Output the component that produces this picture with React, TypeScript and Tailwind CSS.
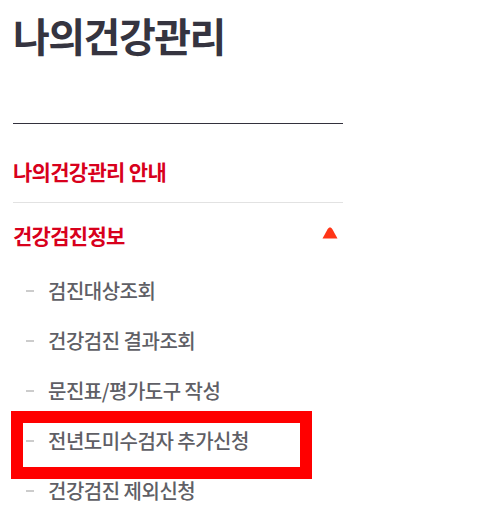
import React from "react";

const font = { fontFamily: '"Noto Sans CJK KR", "Noto Sans", sans-serif' };

const subs = [
  "검진대상조회",
  "건강검진 결과조회",
  "문진표/평가도구 작성",
  "전년도미수검자 추가신청",
  "건강검진 제외신청",
];

export default function App() {
  return (
    <div className="relative w-[496px] h-[532px] bg-white overflow-hidden" style={font}>
      <div className="pl-[13px] w-[343px]">
        <h1 className="pt-[8px] text-[40px] leading-[54px] font-bold tracking-[-1.5px] text-[#353440]">
          나의건강관리
        </h1>
        <div className="mt-[61px] h-px bg-[#33313d]" />
        <div className="pt-[33px] pb-[15px] border-b border-[#e2e2e2]">
          <div className="h-[30px] flex items-center">
            <span className="text-[21px] font-bold tracking-[-0.7px] text-[#d8001c]">나의건강관리 안내</span>
          </div>
        </div>
        <div className="h-[63px] pt-[18px] flex items-start justify-between">
          <div className="h-[30px] flex items-center">
            <span className="text-[21px] font-bold tracking-[-0.7px] text-[#d8001c]">건강검진정보</span>
          </div>
          <svg width="16" height="12" viewBox="0 0 16 12" className="mt-[6px] mr-[5px]">
            <path d="M8 0.5 C7 0.5 6.3 1.2 5.6 2.2 L0.5 11.5 H15.5 L10.4 2.2 C9.7 1.2 9 0.5 8 0.5 Z" fill="#ff3517" />
          </svg>
        </div>
        <ul>
          {subs.map((s) => (
            <li key={s} className="h-[50px] flex items-center">
              <span className="ml-[13px] w-[8px] h-[2px] bg-[#cccccc]" />
              <span className="ml-[14px] text-[20px] font-medium tracking-[-0.5px] text-[#5f5f66]">{s}</span>
            </li>
          ))}
        </ul>
      </div>
      <div className="absolute left-[11px] top-[411px] w-[301px] h-[68px] border-[12px] border-[#ff0000]" />
    </div>
  );
}
